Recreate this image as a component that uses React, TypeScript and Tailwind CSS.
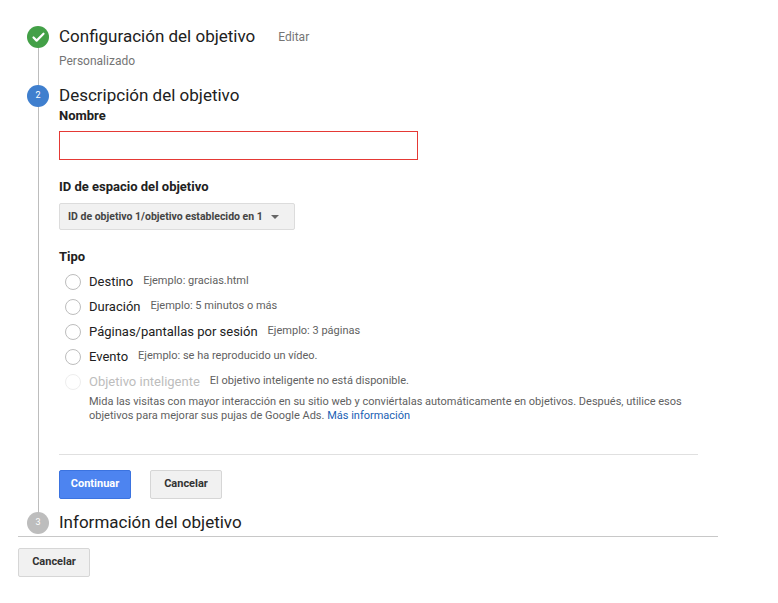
import { Check } from "lucide-react";

const font = { fontFamily: "Roboto, 'Liberation Sans', sans-serif" };

function Radio({ label, example, disabled }: { label: string; example: string; disabled?: boolean }) {
  return (
    <div className="flex items-center h-[25px]">
      <span className={"w-[16px] h-[16px] rounded-full border ml-[6px] mr-[8px] bg-white " + (disabled ? "border-[#eeeeee]" : "border-[#bdbdbd]")} />
      <span className={"text-[13px] " + (disabled ? "text-[#bdbdbd]" : "text-[#212121]")}>{label}</span>
      <span className="text-[11px] text-[#616161] ml-[10px]">{example}</span>
    </div>
  );
}

export default function App() {
  return (
    <div style={font} className="w-[778px] h-[603px] bg-white relative">
      <div className="absolute left-[38px] top-[44px] h-[472px] w-px bg-[#bdbdbd]" />
      <div className="pl-[27px] pt-[25px] relative">
        <div className="flex items-center h-[24px]">
          <span className="w-[22px] h-[22px] rounded-full bg-[#43a047] flex items-center justify-center">
            <Check size={15} strokeWidth={3.5} color="white" />
          </span>
          <span className="ml-[10px] text-[17px] text-[#212121]">Configuración del objetivo</span>
          <span className="ml-[23px] text-[12px] text-[#757575]">Editar</span>
        </div>
        <div className="ml-[32px] mt-[3px] text-[12px] text-[#757575]">Personalizado</div>
        <div className="flex items-center h-[24px] mt-[14px]">
          <span className="w-[22px] h-[22px] rounded-full bg-[#3f7fce] text-white text-[9px] flex items-center justify-center">2</span>
          <span className="ml-[10px] text-[17px] text-[#212121]">Descripción del objetivo</span>
        </div>
        <div className="ml-[32px] w-[639px]">
          <div className="text-[13px] leading-[16px] font-bold text-[#212121]">Nombre</div>
          <div className="mt-[7px] w-[359px] h-[29px] border border-[#e53935]" />
          <div className="mt-[19px] text-[13px] leading-[16px] font-bold text-[#212121]">ID de espacio del objetivo</div>
          <div className="mt-[8px] w-[236px] h-[27px] bg-[#f1f1f1] border border-[#dcdcdc] rounded-[2px] flex items-center px-[8px] text-[10.5px] font-bold text-[#444444] whitespace-nowrap">
            <span>ID de objetivo 1/objetivo establecido en 1</span>
            <span className="ml-[8px] w-0 h-0 border-l-[4px] border-r-[4px] border-t-[4px] border-l-transparent border-r-transparent border-t-[#666]" />
          </div>
          <div className="mt-[19px] text-[13px] leading-[16px] font-bold text-[#212121]">Tipo</div>
          <div className="mt-[4px]">
            <Radio label="Destino" example="Ejemplo: gracias.html" />
            <Radio label="Duración" example="Ejemplo: 5 minutos o más" />
            <Radio label="Páginas/pantallas por sesión" example="Ejemplo: 3 páginas" />
            <Radio label="Evento" example="Ejemplo: se ha reproducido un vídeo." />
            <Radio label="Objetivo inteligente" example="El objetivo inteligente no está disponible." disabled />
          </div>
          <p className="ml-[30px] text-[11px] leading-[14px] text-[#616161] mt-[1px]">
            Mida las visitas con mayor interacción en su sitio web y conviértalas automáticamente en objetivos. Después, utilice esos objetivos para mejorar sus pujas de Google Ads. <span className="text-[#1a5fb4]">Más información</span>
          </p>
          <div className="mt-[31px] h-px bg-[#e0e0e0]" />
          <div className="mt-[15px] flex gap-[19px]">
            <button className="w-[72px] h-[29px] bg-[#4d84f0] border border-[#3b73e0] rounded-[2px] text-white text-[11px] font-bold">Continuar</button>
            <button className="w-[72px] h-[29px] bg-[#f1f1f1] border border-[#d6d6d6] rounded-[2px] text-[#333] text-[11px] font-bold">Cancelar</button>
          </div>
        </div>
        <div className="flex items-center h-[24px] mt-[12px]">
          <span className="w-[22px] h-[22px] rounded-full bg-[#bdbdbd] text-white text-[9px] flex items-center justify-center">3</span>
          <span className="ml-[10px] text-[17px] text-[#212121]">Información del objetivo</span>
        </div>
      </div>
      <div className="ml-[18px] w-[700px] h-px bg-[#c8c8c8] mt-[1px]" />
      <button style={font} className="ml-[18px] mt-[11px] w-[72px] h-[29px] bg-[#f1f1f1] border border-[#d6d6d6] rounded-[2px] text-[#333] text-[11px] font-bold">Cancelar</button>
    </div>
  );
}
